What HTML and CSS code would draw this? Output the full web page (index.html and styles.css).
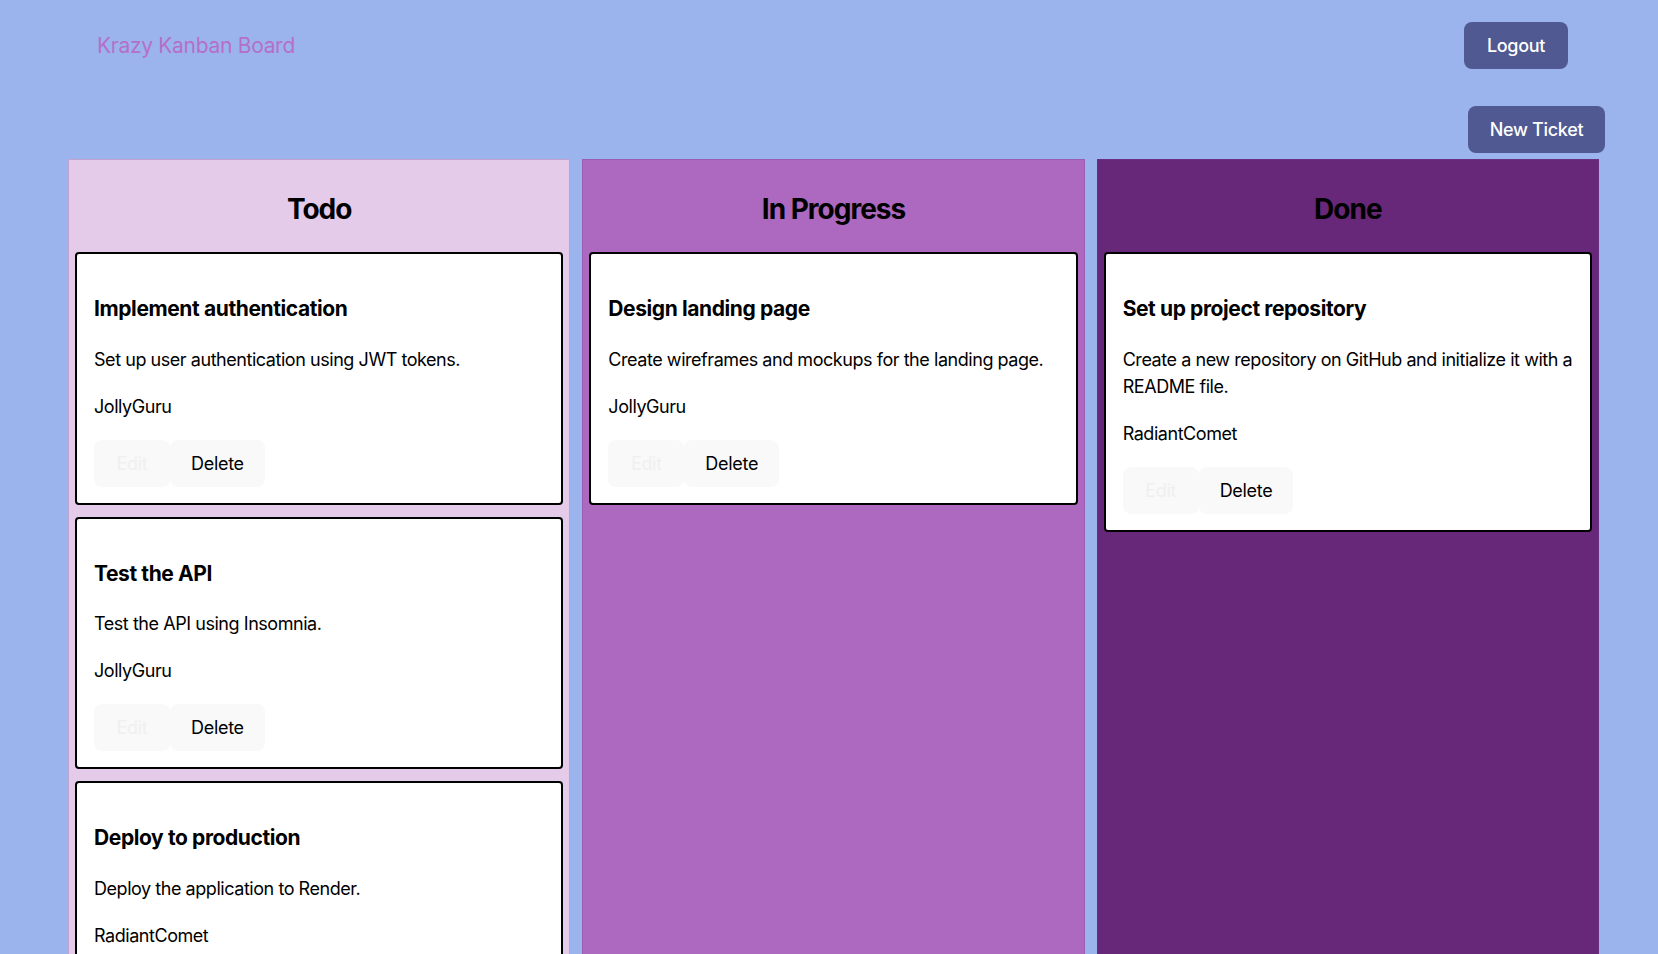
FILE: index.html
```html
<!DOCTYPE html>
<html lang="en">
<head>
<meta charset="utf-8">
<title>Krazy Kanban Board</title>
<link rel="stylesheet" href="styles.css">
</head>
<body>
<header class="nav">
  <h1 class="brand">Krazy Kanban Board</h1>
  <button class="btn-dark btn-logout">Logout</button>
</header>
<div class="toolbar">
  <button class="btn-dark btn-new">New Ticket</button>
</div>
<main class="board">
  <section class="col col-todo">
    <h2 class="col-title">Todo</h2>
    <article class="card">
      <h3 class="card-title">Implement authentication</h3>
      <p class="card-text">Set up user authentication using JWT tokens.</p>
      <p class="card-text">JollyGuru</p>
      <div class="actions"><button class="btn-light btn-edit">Edit</button><button class="btn-light">Delete</button></div>
    </article>
    <article class="card">
      <h3 class="card-title">Test the API</h3>
      <p class="card-text">Test the API using Insomnia.</p>
      <p class="card-text">JollyGuru</p>
      <div class="actions"><button class="btn-light btn-edit">Edit</button><button class="btn-light">Delete</button></div>
    </article>
    <article class="card">
      <h3 class="card-title">Deploy to production</h3>
      <p class="card-text">Deploy the application to Render.</p>
      <p class="card-text">RadiantComet</p>
      <div class="actions"><button class="btn-light btn-edit">Edit</button><button class="btn-light">Delete</button></div>
    </article>
  </section>
  <section class="col col-progress">
    <h2 class="col-title">In Progress</h2>
    <article class="card">
      <h3 class="card-title">Design landing page</h3>
      <p class="card-text">Create wireframes and mockups for the landing page.</p>
      <p class="card-text">JollyGuru</p>
      <div class="actions"><button class="btn-light btn-edit">Edit</button><button class="btn-light">Delete</button></div>
    </article>
  </section>
  <section class="col col-done">
    <h2 class="col-title">Done</h2>
    <article class="card">
      <h3 class="card-title">Set up project repository</h3>
      <p class="card-text">Create a new repository on GitHub and initialize it with a README file.</p>
      <p class="card-text">RadiantComet</p>
      <div class="actions"><button class="btn-light btn-edit">Edit</button><button class="btn-light">Delete</button></div>
    </article>
  </section>
</main>
</body>
</html>
```

FILE: styles.css
```css
* { box-sizing: border-box; }

html, body {
  margin: 0;
  padding: 0;
}

body {
  background: #9bb4ed;
  font-family: Inter, "Noto Sans", sans-serif;
  font-size: 18px;
  line-height: 1.5;
  color: #000;
  min-height: 954px;
}

.nav {
  display: flex;
  align-items: center;
  justify-content: space-between;
  padding: 22px 90px 0 97px;
  height: 69px;
}

.brand {
  margin: 0;
  font-size: 21px;
  font-weight: 400;
  color: #b56fc9;
  letter-spacing: -0.3px;
}

.btn-dark {
  background: #505991;
  color: #fff;
  border: none;
  border-radius: 8px;
  font-family: Inter, "Noto Sans", sans-serif;
  font-size: 18px;
  line-height: 27px;
  height: 47px;
  padding: 0 20px;
  font-weight: 500;
  white-space: nowrap;
  letter-spacing: -0.3px;
}

.btn-logout { width: 104px; }

.toolbar {
  display: flex;
  justify-content: flex-end;
  padding: 37px 53px 0 0;
}

.btn-new { width: 137px; }

.board {
  display: grid;
  grid-template-columns: repeat(3, 1fr);
  gap: 12px;
  margin: 6px 59px 0 68px;
}

.col {
  border: 1px solid rgba(110, 70, 150, 0.3);
  padding: 0 6px 6px;
  min-height: 800px;
}

.col-todo { background: #e4cbe9; }
.col-progress { background: #ad69bf; }
.col-done { background: #68287a; }

.col-title {
  margin: 28px 0 21px;
  text-align: center;
  font-size: 28px;
  line-height: 43px;
  font-weight: 700;
  letter-spacing: -1px;
}

.card {
  background: #fff;
  border: 2px solid #000;
  border-radius: 4px;
  padding: 16px 17px 16px;
  margin-bottom: 12px;
}

.card-title {
  margin: 23px 0 21px;
  font-size: 21px;
  line-height: 1.5;
  font-weight: 700;
  letter-spacing: -0.4px;
}

.card-text {
  margin: 0 0 20px;
  font-size: 18px;
  line-height: 27px;
  letter-spacing: -0.45px;
}

.actions {
  display: flex;
  margin-top: 17px;
}

.btn-light {
  background: #f9f9f9;
  border: none;
  border-radius: 8px;
  font-family: Inter, "Noto Sans", sans-serif;
  font-size: 18px;
  line-height: 27px;
  height: 47px;
  padding: 0 21px;
  color: #000;
  font-weight: 400;
  letter-spacing: -0.3px;
}

.btn-edit {
  color: #f0f0f0;
  width: 76px;
}
```
